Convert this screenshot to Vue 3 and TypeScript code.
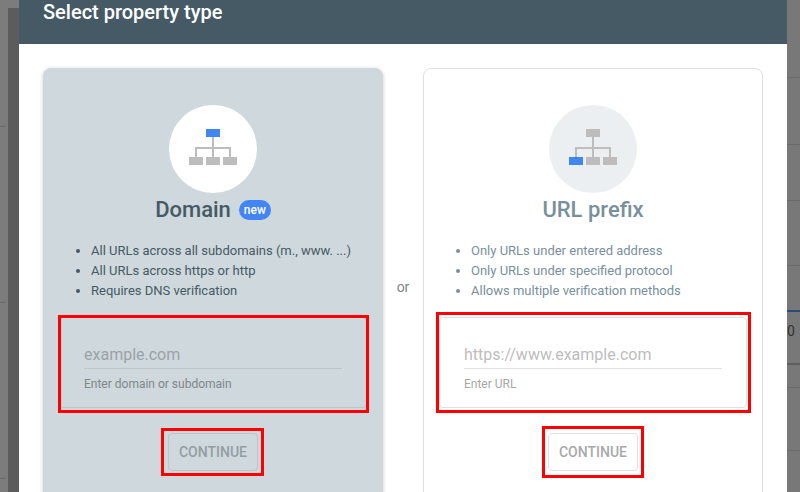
<script setup lang="ts">
interface Card {
  key: string
  title: string
  badge?: string
  bullets: string[]
  placeholder: string
  hint: string
  activeLeaf: boolean
}
const cards: Card[] = [
  {
    key: 'domain',
    title: 'Domain',
    badge: 'new',
    bullets: ['All URLs across all subdomains (m., www. ...)', 'All URLs across https or http', 'Requires DNS verification'],
    placeholder: 'example.com',
    hint: 'Enter domain or subdomain',
    activeLeaf: false,
  },
  {
    key: 'url',
    title: 'URL prefix',
    bullets: ['Only URLs under entered address', 'Only URLs under specified protocol', 'Allows multiple verification methods'],
    placeholder: 'https://www.example.com',
    hint: 'Enter URL',
    activeLeaf: true,
  },
]
const leftLines = [126, 302, 478]
const rightLines = [77, 144, 200, 265, 387, 450]
</script>

<template>
  <div class="page">
    <div class="left-strip">
      <div v-for="y in leftLines" :key="y" class="line left-line" :style="{ top: y + 'px' }"></div>
      <div class="dark-panel"></div>
    </div>
    <div class="modal">
      <header class="head"><h1>Select property type</h1></header>
      <div class="body">
        <template v-for="(c, i) in cards" :key="c.key">
          <div v-if="i === 1" class="or">or</div>
          <section class="card" :class="c.key">
            <div class="circle">
              <svg class="tree" width="48" height="36" viewBox="0 0 48 36">
                <path d="M24 8v20M7 28v-9h34v9" fill="none" stroke="#bdbdbd" stroke-width="2" />
                <rect x="17" y="0" width="14" height="8" :fill="c.activeLeaf ? '#bdbdbd' : '#4285f4'" />
                <rect x="0" y="28" width="14" height="8" :fill="c.activeLeaf ? '#4285f4' : '#bdbdbd'" />
                <rect x="17" y="28" width="14" height="8" fill="#bdbdbd" />
                <rect x="34" y="28" width="14" height="8" fill="#bdbdbd" />
              </svg>
            </div>
            <h2 class="title">{{ c.title }}<span v-if="c.badge" class="badge">{{ c.badge }}</span></h2>
            <ul class="bullets">
              <li v-for="b in c.bullets" :key="b">{{ b }}</li>
            </ul>
            <div class="field">
              <div class="input">{{ c.placeholder }}</div>
              <div class="hint">{{ c.hint }}</div>
              <div class="mark field-mark"></div>
            </div>
            <div class="btn-wrap">
              <button class="btn" type="button">CONTINUE</button>
              <div class="mark btn-mark"></div>
            </div>
          </section>
        </template>
      </div>
    </div>
    <div class="right-strip">
      <div v-for="y in rightLines" :key="y" class="line right-line" :style="{ top: y + 'px' }"></div>
      <div class="blue-line"></div>
      <div class="dark-line"></div>
      <span class="cell-text">0</span>
    </div>
  </div>
</template>

<style>
html, body { margin: 0; overflow: hidden; }
</style>

<style scoped>
.page {
  width: 800px;
  height: 492px;
  overflow: hidden;
  background: #7a7a7a;
  font-family: Roboto, "Liberation Sans", sans-serif;
  display: flex;
}
.left-strip {
  position: relative;
  width: 19px;
  flex: none;
  background: #7c7c7c;
}
.dark-panel {
  position: absolute;
  left: 8px;
  right: 0;
  top: 8px;
  bottom: 0;
  background: #5c5c5c;
}
.line { position: absolute; height: 1px; background: #6a6a6a; }
.left-line { left: 0; width: 6px; }
.right-strip {
  position: relative;
  flex: 1;
  background: #787878;
  overflow: hidden;
}
.right-line { left: 0; right: 0; }
.blue-line {
  position: absolute;
  left: 0;
  right: 0;
  top: 310px;
  height: 2px;
  background: #2f4a80;
}
.dark-line {
  position: absolute;
  left: 0;
  right: 0;
  top: 363px;
  height: 2px;
  background: #5e5e5e;
}
.cell-text {
  position: absolute;
  left: 0;
  top: 323px;
  font-size: 14px;
  line-height: 16px;
  color: #333;
}
.modal {
  width: 768px;
  height: 492px;
  background: #fff;
  flex: none;
}
.head {
  height: 44px;
  background: #455a64;
  box-sizing: border-box;
  padding-left: 24px;
}
.head h1 {
  margin: 0;
  color: #fff;
  font-size: 20px;
  font-weight: 500;
  line-height: 24px;
}
.body {
  display: flex;
  padding: 24px 24px 0;
  align-items: flex-start;
}
.or {
  width: 40px;
  flex: none;
  text-align: center;
  font-size: 14px;
  color: #80868b;
  line-height: 20px;
  margin-top: 209px;
}
.card {
  width: 340px;
  height: 480px;
  flex: none;
  box-sizing: border-box;
  border-radius: 8px;
  border: 1px solid #e0e0e0;
  display: flex;
  flex-direction: column;
  align-items: center;
  padding-top: 36px;
}
.card.domain {
  background: #cfd8dc;
  border-color: #cfd8dc;
  box-shadow: 0 1px 4px rgba(0, 0, 0, 0.2);
  color: #455a64;
}
.card.url { background: #fff; color: #78909c; }
.circle {
  width: 88px;
  height: 88px;
  border-radius: 50%;
  background: #fff;
  display: flex;
  align-items: center;
  justify-content: center;
}
.url .circle { background: #eceff1; }
.tree { margin-bottom: 4px; }
.title {
  margin: 1px 0 0;
  font-size: 22px;
  font-weight: 500;
  line-height: 32px;
  display: flex;
  align-items: center;
  height: 32px;
}
.badge {
  margin-left: 8px;
  background: #4285f4;
  color: #fff;
  border-radius: 10px;
  font-size: 12px;
  line-height: 20px;
  height: 20px;
  padding: 0 5px;
}
.bullets {
  align-self: flex-start;
  margin: 15px 0 0;
  padding: 0 0 0 47px;
  font-size: 13px;
  line-height: 20px;
  width: 100%;
  box-sizing: border-box;
}
.field {
  position: relative;
  box-sizing: border-box;
  width: 308px;
  height: 91px;
  margin-top: 16px;
  padding: 21px 24px 0;
  border: 1px solid #e0e0e0;
  border-radius: 4px;
}
.domain .field { border-color: #bcc5c9; }
.input {
  font-size: 16px;
  line-height: 31px;
  height: 29px;
  color: #9aa3a7;
  border-bottom: 1px solid #bcc5c9;
  box-sizing: content-box;
}
.url .input { color: #bdbdbd; border-bottom-color: #e0e0e0; }
.hint {
  font-size: 12px;
  line-height: 14px;
  margin-top: 8px;
  color: #7d878c;
}
.url .hint { color: #a6a6a6; }
.mark {
  position: absolute;
  box-sizing: border-box;
  border: 3px solid #f00;
  pointer-events: none;
}
.field-mark { left: -2px; top: -3px; width: 311px; height: 98px; }
.url .field-mark { left: -4px; top: -6px; width: 315px; height: 101px; }
.btn-wrap {
  position: relative;
  margin-top: 25px;
  display: flex;
}
.btn-mark { left: -7px; top: -5px; width: 103px; height: 48px; }
.url .btn-mark { left: -6px; top: -7px; width: 102px; height: 52px; }
.btn {
  width: 90px;
  height: 38px;
  padding: 0;
  background: transparent;
  border: 1px solid #bcc5c9;
  border-radius: 4px;
  font-family: inherit;
  font-size: 14px;
  font-weight: 500;
  color: #949ea3;
}
.url .btn { border-color: #e0e0e0; color: #a9a9a9; }
</style>
